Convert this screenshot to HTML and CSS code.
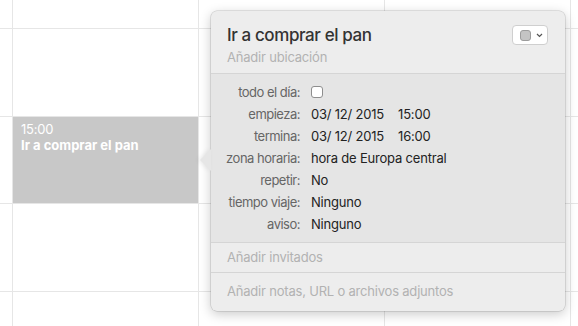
FILE: index.html
```html
<!DOCTYPE html>
<html lang="es">
<head>
    <meta charset="UTF-8">
    <title>Calendario</title>
    <link rel="stylesheet" href="styles.css">
</head>
<body>

<div class="calendar">
    <div class="cell"></div><div class="cell"></div><div class="cell"></div><div class="cell"></div><div class="cell"></div>
    <div class="cell"></div><div class="cell"></div><div class="cell"></div><div class="cell"></div><div class="cell"></div>
    <div class="cell"></div>
    <div class="cell">
        <div class="event">
            <div class="event-time">15:00</div>
            <div class="event-title">Ir a comprar el pan</div>
        </div>
    </div>
    <div class="cell"></div><div class="cell"></div><div class="cell"></div>
    <div class="cell"></div><div class="cell"></div><div class="cell"></div><div class="cell"></div><div class="cell"></div>
    <div class="cell"></div><div class="cell"></div><div class="cell"></div><div class="cell"></div><div class="cell"></div>
</div>

<div class="popover">
    <div class="arrow"></div>

    <div class="pop-header">
        <div class="pop-title-row">
            <h1 class="pop-title">Ir a comprar el pan</h1>
            <button class="color-btn">
                <span class="swatch"></span>
                <svg class="chevron" width="7" height="5" viewBox="0 0 7 5"><path d="M1 1 L3.5 3.5 L6 1" fill="none" stroke="#555" stroke-width="1.2"/></svg>
            </button>
        </div>
        <div class="placeholder">Añadir ubicación</div>
    </div>

    <div class="details">
        <div class="label">todo el día:</div>
        <div class="value"><span class="checkbox"></span></div>

        <div class="label">empieza:</div>
        <div class="value">03/ 12/ 2015<span class="time">15:00</span></div>

        <div class="label">termina:</div>
        <div class="value">03/ 12/ 2015<span class="time">16:00</span></div>

        <div class="label">zona horaria:</div>
        <div class="value">hora de Europa central</div>

        <div class="label">repetir:</div>
        <div class="value">No</div>

        <div class="label">tiempo viaje:</div>
        <div class="value">Ninguno</div>

        <div class="label">aviso:</div>
        <div class="value">Ninguno</div>
    </div>

    <div class="pop-row invitees">Añadir invitados</div>
    <div class="pop-row notes">Añadir notas, URL o archivos adjuntos</div>
</div>

</body>
</html>
```

FILE: styles.css
```css
body {
    margin: 0;
    padding: 0;
    background: #fff;
    font-family: Inter, "Noto Sans", sans-serif;
    overflow: hidden;
}
.calendar {
    display: grid;
    grid-template-columns: 12px 185px 185px 185px 1fr;
    grid-template-rows: 28px 87px 86px 87px 40px;
    gap: 1px;
    background: #e6e6e6;
    width: 578px;
    height: 326px;
}
.cell {
    background: #fff;
}
.event {
    height: 100%;
    background: #c8c8c8;
    color: #fff;
    padding: 5px 8px;
    box-sizing: border-box;
    font-size: 13px;
}
.event-time {
    line-height: 15px;
    letter-spacing: -0.2px;
}
.event-title {
    font-weight: 700;
    line-height: 17px;
}
.popover {
    position: absolute;
    left: 211px;
    top: 11px;
    width: 354px;
    background: #ededed;
    border-radius: 6px;
    box-shadow: 0 0 0 0.5px rgba(0, 0, 0, 0.18), 0 3px 12px rgba(0, 0, 0, 0.22);
    font-size: 13px;
    letter-spacing: -0.2px;
}
.arrow {
    position: absolute;
    left: -11px;
    top: 138px;
    width: 0;
    height: 0;
    border-top: 11px solid transparent;
    border-bottom: 11px solid transparent;
    border-right: 11px solid #e6e6e6;
    filter: drop-shadow(-2px 0 2px rgba(0, 0, 0, 0.08));
}
.pop-header {
    padding: 13px 16px 0 16px;
    height: 49px;
    border-bottom: 1px solid #d5d5d5;
}
.pop-title-row {
    display: flex;
    justify-content: space-between;
    align-items: center;
}
.pop-title {
    margin: 0;
    font-size: 17px;
    font-weight: 500;
    color: #333;
    line-height: 22px;
    letter-spacing: -0.4px;
}
.color-btn {
    display: flex;
    align-items: center;
    gap: 5px;
    width: 36px;
    height: 20px;
    padding: 0 0 0 7px;
    margin-right: 1px;
    background: #fff;
    border: 1px solid #cfcfcf;
    border-radius: 4px;
    box-sizing: border-box;
}
.swatch {
    width: 11px;
    height: 11px;
    background: #c4c4c4;
    border: 1px solid #9c9c9c;
    border-radius: 3px;
    box-sizing: border-box;
}
.placeholder {
    margin-top: 1px;
    color: #b2b2b2;
    line-height: 20px;
}
.details {
    display: grid;
    grid-template-columns: 89px 1fr;
    column-gap: 11px;
    grid-auto-rows: 22px;
    padding: 7px 0;
    background: #e5e5e5;
    align-items: center;
}
.label {
    text-align: right;
    color: #666;
    letter-spacing: -0.5px;
}
.value {
    color: #222;
    display: flex;
    align-items: center;
}
.time {
    margin-left: 14px;
}
.checkbox {
    width: 12px;
    height: 12px;
    background: #fff;
    border: 1px solid #8e8e8e;
    border-radius: 3px;
    box-sizing: border-box;
}
.pop-row {
    padding: 0 16px;
    color: #b2b2b2;
    border-top: 1px solid #d5d5d5;
}
.invitees {
    height: 29px;
    line-height: 29px;
}
.notes {
    height: 38px;
    line-height: 37px;
}
```
